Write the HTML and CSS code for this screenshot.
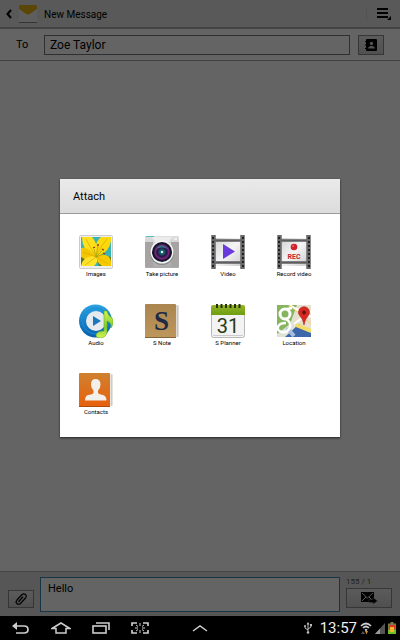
FILE: index.html
```html
<!DOCTYPE html>
<html lang="en">
<head>
  <meta charset="UTF-8">
  <meta name="viewport" content="width=device-width, initial-scale=1">
  <title>New Message</title>
  <link rel="stylesheet" href="styles.css">
</head>
<body>

  <div class="app">
    <header class="topbar">
      <button class="icon-btn back" aria-label="Back">
        <svg width="6" height="10" viewBox="0 0 6 10"><path d="M5 1 L1.5 5 L5 9" fill="none" stroke="#000" stroke-width="2"/></svg>
      </button>
      <svg class="logo" width="20" height="20" viewBox="0 0 20 20">
        <rect x="1" y="1" width="18" height="18" fill="#f4f4f4"/>
        <path d="M1 6 L10 12 L19 6 V19 H1 Z" fill="#ececec"/>
        <path d="M1 1 H19 V5 L12 10 Q10 11.500 8 10 L1 5 Z" fill="#dfae14"/>
        <path d="M1 18.500 H19" stroke="#888"/>
      </svg>
      <h1>New Message</h1>
      <button class="icon-btn menu" aria-label="Menu">
        <svg width="15" height="14" viewBox="0 0 15 14"><path d="M0 2 H11 M0 6 H11 M0 10 H11" stroke="#000" stroke-width="2"/><path d="M14 9 V13 H10 Z"/></svg>
      </button>
    </header>

    <div class="recipient">
      <label for="to">To</label>
      <input id="to" type="text" value="Zoe Taylor">
      <button class="grey-btn contact-btn" aria-label="Choose contact">
        <svg width="12" height="12" viewBox="0 0 12 12"><rect x="1" width="11" height="12" rx="1"/><path d="M0 2.500 H2 M0 6 H2 M0 9.500 H2" stroke="#000"/><circle cx="6.500" cy="4.500" r="1.700" fill="#ccc"/><path d="M3 9.500 Q3 7.500 5.500 7 H7.500 Q10 7.500 10 9.500 Z" fill="#ccc"/></svg>
      </button>
    </div>

    <main class="thread"></main>

    <div class="compose">
      <button class="grey-btn attach-btn" aria-label="Attach">
        <svg width="12" height="12" viewBox="0 0 12 12"><path d="M2 7 L6.500 2 Q8.500 0 10.500 1.500 Q12 3 10.500 5 L5.500 10.500 Q3.500 12 1.800 10.500 Q.3 9 1.800 7.500 M3.800 8.500 L7.800 4" fill="none" stroke="#000" stroke-width="1.200" stroke-linecap="round"/></svg>
      </button>
      <textarea aria-label="Message">Hello</textarea>
      <div class="send">
        <span class="count">155 / 1</span>
        <button class="grey-btn send-btn" aria-label="Send">
          <svg width="17" height="12" viewBox="0 0 17 12"><rect width="13" height="10"/><path d="M1 1 L6.500 6 L12 1 M1 9 L5 5 M12 9 L8 5" fill="none" stroke="#ddd"/><path d="M8 7.500 H12 V5.500 L16.500 9 L12 12 V10.500 H8 Z" stroke="#aaa" stroke-width=".4"/></svg>
        </button>
      </div>
    </div>

    <div class="overlay">
      <section class="dialog" role="dialog" aria-labelledby="attach-title">
        <h2 id="attach-title">Attach</h2>
        <div class="grid">

          <button class="item">
            <svg width="34" height="34" viewBox="0 0 34 34">
              <rect x=".5" y=".5" width="33" height="33" rx="1" fill="#eee" stroke="#ccc"/>
              <rect x="2" y="2" width="30" height="29" fill="#36b3b5"/>
              <path d="M2 20 L14 21 L8 31 H2 Z M18 20 L32 22 V31 H20 Z" fill="#5c7420"/>
              <path d="M17 22 Q3 17 3 2 H13 Q20 10 17 22 Z" fill="#ffe01a"/>
              <path d="M17 22 Q14 8 22 2 H32 V6 Q30 18 17 22 Z" fill="#fcd90d"/>
              <path d="M17 22 Q9 11 2 13 V22 Q9 27 17 22 Z" fill="#f2c600"/>
              <path d="M17 21 Q4 20 2 31 H15 Q20 27 17 21 Z" fill="#ffe32b"/>
              <path d="M17 21 Q31 17 32 27 V31 H23 Q18 28 17 21 Z" fill="#f7ca00"/>
              <path d="M7 4 Q12 14 17 22 M28 4 Q21 12 17 22 M4 17 L17 22 M6 30 L17 22 L29 29" stroke="#dba800" fill="none" stroke-width=".7"/>
              <path d="M17 22 L15 14 M17 22 L19 11 M17 22 L24 15 M17 22 L25 19" stroke="#9a9c13" fill="none" stroke-width=".7"/>
              <path d="M14 13 L16 12 M18 10 H20 M23 14 L25 15 M24 18 L26 19" stroke="#8e3a0c" stroke-width="1.300"/>
            </svg>
            <span>Images</span>
          </button>

          <button class="item">
            <svg width="34" height="34" viewBox="0 0 34 34">
              <defs>
                <linearGradient id="cam" x2="0" y2="1"><stop stop-color="#dedede"/><stop offset="1" stop-color="#aaa"/></linearGradient>
                <radialGradient id="lens"><stop stop-color="#b8f4f0"/><stop offset=".2" stop-color="#126b75"/><stop offset=".55" stop-color="#291542"/><stop offset=".8" stop-color="#792683"/><stop offset="1" stop-color="#151126"/></radialGradient>
              </defs>
              <rect y="1" width="34" height="32" rx="1" fill="url(#cam)"/>
              <path d="M0 7 H8 V32 H0 Z M26 7 H34 V32 H26 Z" fill="#a8a3a3"/>
              <path d="M7 2 H27 L24 7 H10 Z" fill="#ececec"/>
              <path d="M1 1.500 H9" stroke="#55bfc0"/>
              <rect x="29" y="3" width="3" height="2" fill="#eee"/>
              <circle cx="17" cy="18" r="12" fill="#888"/>
              <circle cx="17" cy="17" r="11.500" fill="#f5f5f5"/>
              <circle cx="17" cy="17" r="10" fill="#16162c"/>
              <circle cx="17" cy="17" r="8.500" fill="url(#lens)"/>
              <path d="M11 14 Q16 7 23 14 Q17 11 11 14" fill="#2aa199" opacity=".7"/>
              <circle cx="17" cy="17" r="1" fill="#fff"/>
            </svg>
            <span>Take picture</span>
          </button>

          <button class="item">
            <svg width="34" height="34" viewBox="0 0 34 34">
              <defs><linearGradient id="film" x2="1" y2="1"><stop stop-color="#cfcfcf"/><stop offset=".5" stop-color="#f5f5f5"/><stop offset="1" stop-color="#ccc"/></linearGradient></defs>
              <rect x="3" y="3" width="28" height="28" fill="url(#film)"/>
              <path d="M3 5.500 H31 M3 27.500 H31" stroke="#5d5d60" stroke-width="2.500"/>
              <path d="M2.500 0 V34 M31.500 0 V34" stroke="#68686b" stroke-width="4.500"/>
              <path d="M2 2 V33 M32 2 V33" stroke="#222" stroke-width="2" stroke-dasharray="2 2"/>
              <path d="M12 9 L24 16.500 L12 24 Z" fill="#6a3bdc"/>
            </svg>
            <span>Video</span>
          </button>

          <button class="item">
            <svg width="34" height="34" viewBox="0 0 34 34">
              <rect x="3" y="3" width="28" height="28" fill="url(#film)"/>
              <path d="M3 5.500 H31 M3 27.500 H31" stroke="#5d5d60" stroke-width="2.500"/>
              <path d="M2.500 0 V34 M31.500 0 V34" stroke="#68686b" stroke-width="4.500"/>
              <path d="M2 2 V33 M32 2 V33" stroke="#222" stroke-width="2" stroke-dasharray="2 2"/>
              <circle cx="17" cy="12" r="3.300" fill="#cf2229"/>
              <circle cx="16" cy="11" r="1" fill="#e8696c"/>
              <text class="rec" x="17" y="24" text-anchor="middle">REC</text>
            </svg>
            <span>Record video</span>
          </button>

          <button class="item">
            <svg width="34" height="34" viewBox="0 0 34 34">
              <defs>
                <linearGradient id="disc" x2="0" y2="1"><stop stop-color="#2aa2e2"/><stop offset="1" stop-color="#075fae"/></linearGradient>
                <linearGradient id="note" x2="0" y2="1"><stop stop-color="#d4f34a"/><stop offset=".6" stop-color="#7fcf2e"/><stop offset="1" stop-color="#d8f455"/></linearGradient>
              </defs>
              <circle cx="16.500" cy="17" r="16.500" fill="url(#disc)"/>
              <circle cx="16.500" cy="17" r="13" fill="none" stroke="#1f8bd0" stroke-width="1"/>
              <circle cx="17" cy="17" r="10" fill="#e6e9ee"/>
              <path d="M14 12 L22 17 L14 22 Z" fill="#1778bd"/>
              <path d="M25 7 H28 Q29 12 33 14 Q36 18 32 24 Q33 19 28 17 V28 Q27 34 21 34 Q17 34 17 31 Q18 27 25 27 Z" fill="url(#note)" stroke="#5eaa24" stroke-width=".6"/>
            </svg>
            <span>Audio</span>
          </button>

          <button class="item">
            <svg width="34" height="34" viewBox="0 0 34 34">
              <defs><linearGradient id="cover" x2="0" y2="1"><stop stop-color="#aa854f"/><stop offset="1" stop-color="#bd965b"/></linearGradient></defs>
              <rect x="3" y="1" width="31" height="32" rx="1" fill="#dedbd6"/>
              <path d="M32.500 2 V33" stroke="#bbb5ac" stroke-width=".6"/>
              <rect width="31" height="34" rx="1" fill="url(#cover)"/>
              <path d="M0 33.500 H31" stroke="#836436"/>
              <text class="s-letter" x="16.500" y="26" text-anchor="middle">S</text>
            </svg>
            <span>S Note</span>
          </button>

          <button class="item">
            <svg width="34" height="34" viewBox="0 0 34 34">
              <defs><linearGradient id="cal" x2="0" y2="1"><stop stop-color="#94b526"/><stop offset="1" stop-color="#6f9d12"/></linearGradient></defs>
              <rect x=".5" y="2" width="33" height="31.500" rx="2" fill="#f3f3f3" stroke="#b8b8b8"/>
              <path d="M0 11 V3 Q0 1 2 1 H32 Q34 1 34 3 V11 Z" fill="url(#cal)"/>
              <path d="M2 31.500 H32" stroke="#ccc"/>
              <path d="M6 0 V4 M10.500 0 V4 M15 0 V4 M19.500 0 V4 M24 0 V4 M28.500 0 V4" stroke="#27320b" stroke-width="2"/>
              <text class="day" x="17" y="29" text-anchor="middle">31</text>
            </svg>
            <span>S Planner</span>
          </button>

          <button class="item">
            <svg width="34" height="34" viewBox="0 0 34 34">
              <rect width="34" height="32" y="1" fill="#dfe2d5"/>
              <path d="M0 1 H20 L13 20 L0 30 Z" fill="#86b560"/>
              <path d="M20 1 H34 V25 L17 17 Z" fill="#e9dfce"/>
              <path d="M12 1 L34 13 M34 7 L17 20" stroke="#fff" stroke-width="2"/>
              <path d="M12 1 L34 20" stroke="#f3cf63" stroke-width="1"/>
              <path d="M8 33 L22 20 L34 29 V33 Z" fill="#3c68a9"/>
              <path d="M10 24 L17 32" stroke="#a7bfdd" stroke-width="4"/>
              <path d="M19 21 L34 27" stroke="#f5dc68" stroke-width="4"/>
              <circle cx="8" cy="10" r="5" fill="none" stroke="#fff" stroke-width="3"/>
              <path d="M9 15 Q14 18 13 23 Q11 29 5 28 Q0 27 1 23 Q2 19 9 19 M10 5 L15 4" fill="none" stroke="#fff" stroke-width="2.500"/>
              <path d="M27 21 Q26 15 23 12 A5.500 5.500 0 1 1 31 12 Q28 15 27 21 Z" fill="#d82920" stroke="#a6201b" stroke-width=".6"/>
              <circle cx="27" cy="8.500" r="2" fill="#671410"/>
            </svg>
            <span>Location</span>
          </button>

          <button class="item">
            <svg width="34" height="34" viewBox="0 0 34 34">
              <defs><linearGradient id="book" x2="0" y2="1"><stop stop-color="#cf8130"/><stop offset="1" stop-color="#e85f0c"/></linearGradient></defs>
              <rect x="3" y="1" width="31" height="32" rx="1" fill="#e6e2de"/>
              <path d="M32.500 2 V33" stroke="#c2bbb4" stroke-width=".6"/>
              <rect width="31" height="34" rx="1" fill="url(#book)"/>
              <path d="M0 33.500 H31" stroke="#ae4b0d"/>
              <path d="M16.500 6 Q21.500 6 21.500 11.500 Q21.500 15 19 17.500 V20 Q20 21.500 24 22 Q27.500 23 27.500 27.500 H6 Q6 23 9 22 Q13.500 21.500 14.500 20 V17.500 Q12 15 12 11.500 Q12 6 16.500 6 Z" fill="#f3efeb"/>
            </svg>
            <span>Contacts</span>
          </button>

        </div>
      </section>
    </div>
  </div>

  <nav class="navbar">
    <div class="nav-keys">
      <button class="icon-btn" aria-label="Back key">
        <svg width="18" height="14" viewBox="0 0 18 14"><path d="M3 5 H12 Q16 5 16 8.500 Q16 12 12 12 H4" fill="none" stroke="#ccc" stroke-width="1.700"/><path d="M0 5 L5 1 V9 Z" fill="#ccc"/></svg>
      </button>
      <button class="icon-btn" aria-label="Home">
        <svg width="20" height="14" viewBox="0 0 20 14"><path d="M1 7.500 L10 2 L19 7.500 H15 V12 H5 V7.500 Z" fill="none" stroke="#ccc" stroke-width="1.500"/></svg>
      </button>
      <button class="icon-btn" aria-label="Recent apps">
        <svg width="18" height="14" viewBox="0 0 18 14"><rect x="1" y="5" width="13" height="7" fill="none" stroke="#ccc" stroke-width="1.600"/><path d="M4 2 H17 V9" fill="none" stroke="#ccc" stroke-width="1.600"/></svg>
      </button>
      <button class="icon-btn" aria-label="Screenshot">
        <svg width="18" height="14" viewBox="0 0 18 14"><path d="M1 5 V2 H6 M12 2 H17 V5 M17 9 V12 H12 M6 12 H1 V9" fill="none" stroke="#ccc" stroke-width="1.700"/><path d="M9 2 V5 M9 9 V12 M4 7 H7 M11 7 H14 M5 4 L7 5.500 M13 4 L11 5.500 M5 10 L7 8.500 M13 10 L11 8.500" stroke="#ccc"/></svg>
      </button>
    </div>
    <button class="icon-btn" aria-label="Mini apps">
      <svg width="16" height="8" viewBox="0 0 16 8"><path d="M1 7 L8 2 L15 7" fill="none" stroke="#ccc" stroke-width="1.500"/></svg>
    </button>
    <div class="status">
      <svg class="usb" width="8" height="12" viewBox="0 0 8 12"><path d="M4 1 V10 M1 4 V6 L4 8 M7 3 V5 L4 7" fill="none" stroke="#bbb"/><circle cx="4" cy="10.500" r="1.300" fill="#bbb"/><circle cx="1" cy="4" r="1" fill="#bbb"/><path d="M6 2 H8 V4 H6 Z M4 0 L5.500 2.500 H2.500 Z" fill="#bbb"/></svg>
      <time>13:57</time>
      <svg width="12" height="13" viewBox="0 0 12 13"><path d="M1 4 Q6 -1 11 4 M3 6 Q6 3 9 6" fill="none" stroke="#ccc" stroke-width="1.700"/><path d="M4.500 7.500 Q6 6.500 7.500 7.500 L6 9.500 Z" fill="#ddd"/><path d="M3 9 L5 12 H1 Z" fill="#555"/><path d="M5 9 H8 L6.500 12.500 Z" fill="#d98b3a"/></svg>
      <svg width="10" height="12" viewBox="0 0 10 12"><path d="M10 1 V12 H0 Z" fill="#555"/><path d="M5 6.500 V12 H0 Z" fill="#999"/></svg>
      <svg width="8" height="12" viewBox="0 0 8 12"><path d="M2.500 0 H5.500 V1.500 H8 V12 H0 V1.500 H2.500 Z" fill="#7d7a4c"/><path d="M0 8 H8 V12 H0 Z" fill="#6fbf2c"/><path d="M1 3 H7 V7 H1 Z" fill="#d9331f"/><path d="M2 5 H6 V10 H2 Z" fill="#f0b42a"/></svg>
    </div>
  </nav>

</body>
</html>
```
FILE: styles.css
```css
* {
  box-sizing: border-box;
}
body {
  margin: 0;
  min-height: 100vh;
  display: flex;
  flex-direction: column;
  background: #000;
  color: #000;
  font-family: Roboto, sans-serif;
}
button, input, textarea {
  font-family: inherit;
  color: inherit;
  margin: 0;
}
svg {
  display: block;
  flex: none;
}
.app {
  position: relative;
  flex: 1;
  display: flex;
  flex-direction: column;
  background: #fafafa;
}
.icon-btn {
  background: none;
  border: none;
  padding: 0;
}

/* top bar */
.topbar {
  display: flex;
  align-items: center;
  height: 29px;
  padding: 1px 8px 0 6px;
  background: #dedede;
  border-bottom: 2px solid #a8a8a8;
}
.topbar h1 {
  flex: 1;
  margin: 0 0 0 6px;
  font-size: 10px;
  font-weight: 400;
}
.logo {
  margin-left: 6px;
}
.menu {
  padding-left: 10px;
  border-left: 1px solid #cfcfcf;
}

/* recipient row */
.recipient {
  display: flex;
  align-items: center;
  gap: 8px;
  height: 32px;
  padding: 0 16px;
  border-bottom: 1px solid #a0a0a0;
}
.recipient label {
  width: 20px;
  font-size: 11px;
}
.recipient input {
  flex: 1;
  min-width: 0;
  height: 20px;
  padding: 0 5px;
  background: #fafafa;
  border: 1px solid #777;
  font-size: 12px;
}
.grey-btn {
  display: flex;
  align-items: center;
  justify-content: center;
  height: 20px;
  padding: 0;
  background: linear-gradient(#e4e4e4, #c8c8c8);
  border: 1px solid #888;
}
.contact-btn, .attach-btn {
  width: 26px;
}

.thread {
  flex: 1;
}

/* compose bar */
.compose {
  display: flex;
  align-items: flex-end;
  gap: 6px;
  padding: 4px 8px;
  background: #d8d8d8;
  border-top: 1px solid #aaa;
}
.compose textarea {
  flex: 1;
  min-width: 0;
  height: 35px;
  padding: 4px 7px;
  background: #fafafa;
  border: 1px solid #3a86ad;
  font-size: 11px;
  line-height: 13px;
  resize: none;
}
.attach-btn {
  height: 18px;
  margin-bottom: 4px;
}
.send {
  width: 46px;
  margin-bottom: 4px;
}
.count {
  display: block;
  font-size: 8px;
  line-height: 12px;
  color: #555;
}
.send-btn {
  width: 100%;
}

/* attach dialog */
.overlay {
  position: absolute;
  inset: 0;
  display: flex;
  align-items: center;
  justify-content: center;
  background: rgba(0, 0, 0, 0.6);
}
.dialog {
  width: 70%;
  background: #fff;
  box-shadow: 0 1px 2px #222;
}
.dialog h2 {
  margin: 0;
  padding: 2px 13px 0;
  font-size: 11px;
  font-weight: 400;
  line-height: 32px;
  background: linear-gradient(#eaeaea, #dcdcdc);
  border-bottom: 1px solid #999;
}
.grid {
  display: grid;
  grid-template-columns: repeat(4, 1fr);
  row-gap: 24px;
  padding: 21px 13px 19px 3px;
}
.item {
  display: flex;
  flex-direction: column;
  align-items: center;
  padding: 0;
  background: none;
  border: none;
  font-size: 6px;
  line-height: 8px;
}
.item span {
  margin-top: 1px;
  padding-bottom: 2px;
  white-space: nowrap;
}
.rec {
  font: bold 7px Roboto, sans-serif;
  fill: #c7262b;
}
.s-letter {
  font: bold 27px "Liberation Serif", serif;
  fill: #202a44;
}
.day {
  font: 20px Roboto, sans-serif;
  fill: #2c3a12;
}

/* system bar */
.navbar {
  display: grid;
  grid-template-columns: 1fr auto 1fr;
  align-items: center;
  height: 24px;
  padding: 0 4px;
  background: #000;
}
.nav-keys {
  display: flex;
  gap: 21px;
  padding-left: 8px;
}
.status {
  display: flex;
  align-items: center;
  justify-content: flex-end;
  gap: 3px;
}
.status time {
  color: #eee;
  font-size: 15px;
  line-height: 24px;
}
.usb {
  margin-right: 5px;
}
```
